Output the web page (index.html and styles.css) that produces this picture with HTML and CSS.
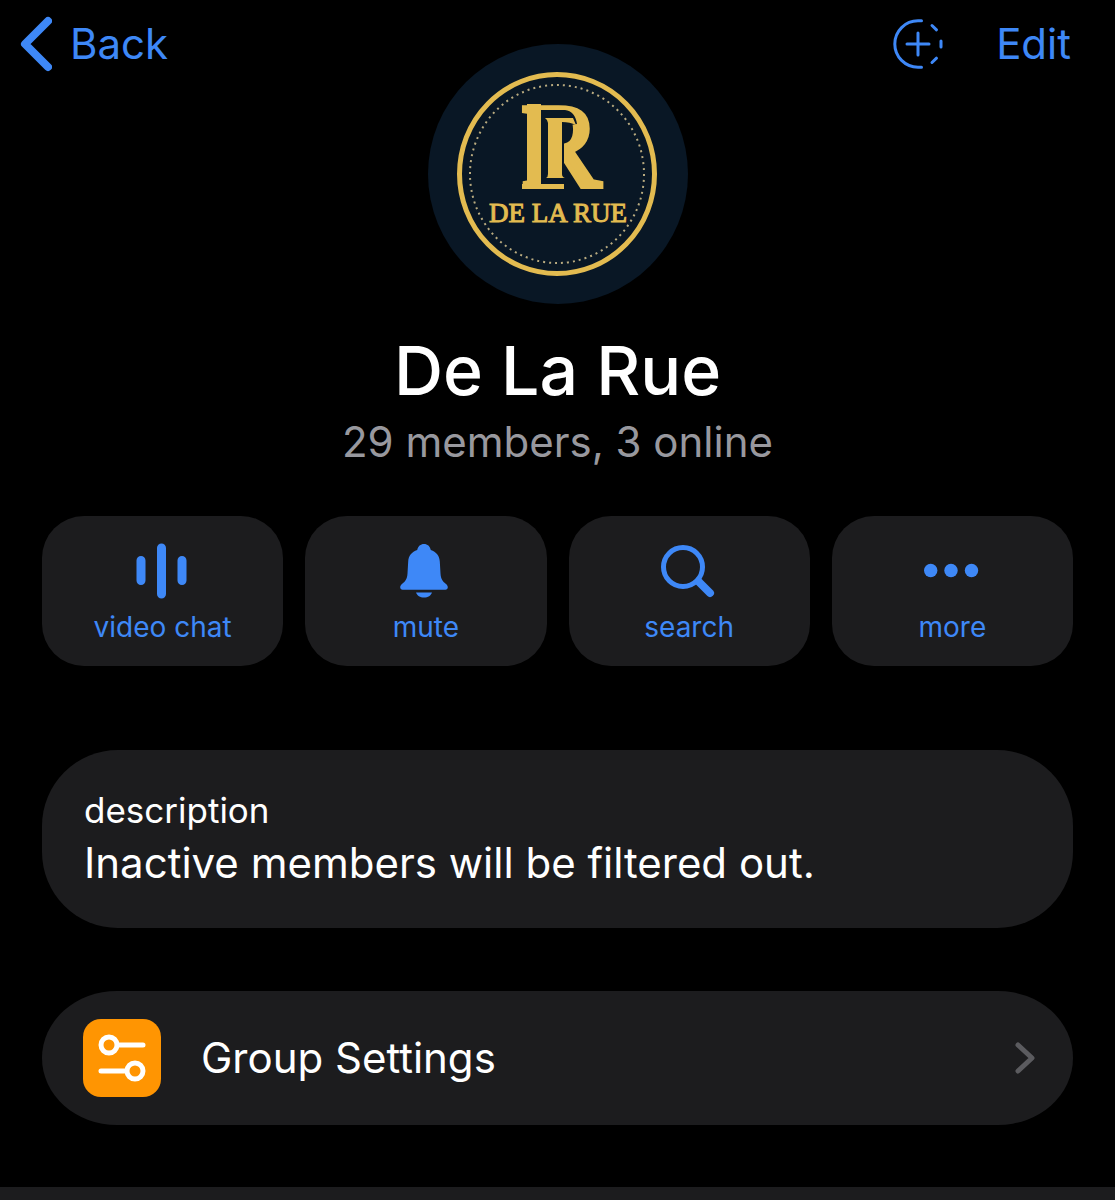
FILE: index.html
```
<!DOCTYPE html>
<html lang="en">
<head>
    <meta charset="UTF-8">
    <meta name="viewport" content="width=device-width, initial-scale=1">
    <title>De La Rue</title>
    <link rel="stylesheet" href="styles.css">
</head>
<body>
    <nav class="topbar">
        <button class="nav-button back">
            <svg width="32" height="56" viewBox="0 0 32 56" aria-hidden="true">
                <path d="M28 5 5 28l23 23" fill="none" stroke="currentColor" stroke-width="8" stroke-linecap="round" stroke-linejoin="round"/>
            </svg>
            Back
        </button>
        <div class="nav-actions">
            <button class="nav-button" aria-label="Add story">
                <svg width="52" height="52" viewBox="0 0 52 52" fill="none" stroke="currentColor" stroke-width="3" stroke-linecap="round" aria-hidden="true">
                    <path d="M29.5 2.8H26a23.2 23.2 0 0 0 0 46.4h3.5"/>
                    <path d="M40 7.5l4.5 4.3M49 23v6M44.5 40.2 40 44.5"/>
                    <path d="M26 15v22M15 26h22"/>
                </svg>
            </button>
            <button class="nav-button">Edit</button>
        </div>
    </nav>

    <header class="profile">
        <svg class="avatar" viewBox="0 0 260 260" role="img" aria-label="De La Rue logo">
            <circle class="logo-bg" cx="130" cy="130" r="130"/>
            <ellipse class="logo-ring" cx="129" cy="130" rx="97.500" ry="99.500"/>
            <ellipse class="logo-dots" cx="129" cy="130" rx="87" ry="89"/>
            <!-- monogram: big letter with a second stem set inside it -->
            <text class="logo-mark" x="93" y="143">R</text>
            <rect class="logo-gold" x="99" y="60" width="14" height="84"/>
            <path class="logo-bg" d="M113 66h24q10 1 12 14l-13 2v59h-23z"/>
            <path class="logo-gold" d="M117 74h28l3 7q-6-3-14-3v52q0 3 3 4h-19q2-1 2-4V79q0-3-3-5z"/>
            <rect class="logo-gold" x="94" y="140" width="42" height="5"/>
            <text class="logo-name" x="130" y="178">DE LA RUE</text>
        </svg>
        <h1>De La Rue</h1>
        <p class="members">29 members, 3 online</p>
    </header>

    <main>
        <div class="actions">
            <button class="action">
                <svg width="56" height="56" viewBox="0 0 56 56" fill="none" stroke="currentColor" stroke-width="9" stroke-linecap="round" aria-hidden="true">
                    <path d="M6 17.500v20M26.500 5v46M47 17.500v20"/>
                </svg>
                <span>video chat</span>
            </button>
            <button class="action">
                <svg width="56" height="56" viewBox="0 0 56 56" fill="currentColor" aria-hidden="true">
                    <path d="M26 1c3.500 0 6 2.300 6.800 6 5.400 2 8.700 5.700 9 11.500l.7 12c.3 6 2.500 8 5.500 10.500 1.300 1.200 1.800 2.100 1.800 3.300 0 1.400-1 2.400-2.400 2.400H4.600c-1.400 0-2.400-1-2.400-2.400 0-1.200.5-2.100 1.800-3.300 3-2.500 5.200-4.500 5.500-10.500l.7-12c.3-5.800 3.600-9.500 9-11.500C20 3.300 22.500 1 26 1z"/>
                    <path d="M18 49.500h16c-1 3-4 5-8 5s-7-2-8-5z"/>
                </svg>
                <span>mute</span>
            </button>
            <button class="action">
                <svg width="56" height="56" viewBox="0 0 56 56" fill="none" stroke="currentColor" stroke-linecap="round" aria-hidden="true">
                    <circle cx="22" cy="24" r="19.500" stroke-width="5"/>
                    <path d="M38 39l11 11" stroke-width="8"/>
                </svg>
                <span>search</span>
            </button>
            <button class="action">
                <svg width="56" height="56" viewBox="0 0 56 56" fill="currentColor" aria-hidden="true">
                    <circle cx="6.700" cy="27.500" r="6.700"/>
                    <circle cx="27" cy="27.500" r="6.700"/>
                    <circle cx="47.500" cy="27.500" r="6.700"/>
                </svg>
                <span>more</span>
            </button>
        </div>

        <section class="card description">
            <h2>description</h2>
            <p>Inactive members will be filtered out.</p>
        </section>

        <button class="card settings">
            <svg class="settings-icon" width="78" height="78" viewBox="0 0 78 78" fill="none" stroke="#fff" stroke-width="5" stroke-linecap="round" aria-hidden="true">
                <circle cx="26" cy="26" r="8"/>
                <path d="M36 26h24M18 52h24"/>
                <circle cx="52" cy="52" r="8"/>
            </svg>
            <span class="settings-label">Group Settings</span>
            <svg class="chevron" width="20" height="32" viewBox="0 0 20 32" fill="none" stroke="currentColor" stroke-width="5" stroke-linecap="round" stroke-linejoin="round" aria-hidden="true">
                <path d="M3 3l14 13L3 29"/>
            </svg>
        </button>
    </main>

    <footer class="tabs"></footer>
</body>
</html>
```
FILE: styles.css
```
* {
    box-sizing: border-box;
}
body {
    margin: 0;
    min-height: 100vh;
    display: flex;
    flex-direction: column;
    background-color: #000;
    color: #fff;
    font-family: Inter, "Liberation Sans", sans-serif;
}
button {
    border: none;
    padding: 0;
    background: none;
    font-family: inherit;
    cursor: pointer;
}
svg {
    display: block;
    flex: none;
}
h1, h2, p {
    margin: 0;
    font-weight: 400;
}

/* top bar */
.topbar {
    display: flex;
    justify-content: space-between;
    align-items: center;
    height: 88px;
    padding: 0 44px 0 20px;
}
.nav-button {
    display: flex;
    align-items: center;
    gap: 18px;
    color: #3e88f7;
    font-size: 42px;
    line-height: 52px;
}
.nav-actions {
    display: flex;
    align-items: center;
    gap: 52px;
}

/* profile */
.profile {
    display: flex;
    flex-direction: column;
    align-items: center;
    margin-top: -44px;
    text-align: center;
}
.avatar {
    width: 260px;
    height: 260px;
}
.logo-bg {
    fill: #091725;
}
.logo-gold {
    fill: #e3bb50;
}
.logo-ring {
    fill: none;
    stroke: #e3bb50;
    stroke-width: 5;
}
.logo-dots {
    fill: none;
    stroke: #b9ab80;
    stroke-width: 2;
    stroke-dasharray: 2 4;
}
.logo-mark, .logo-name {
    font-family: "Liberation Serif", serif;
    fill: #e3bb50;
    stroke: #e3bb50;
}
.logo-mark {
    font-size: 120px;
    stroke-width: 5;
}
.logo-name {
    font-size: 27px;
    text-anchor: middle;
    stroke-width: 1;
}
.profile h1 {
    margin-top: 24px;
    font-size: 68px;
    font-weight: 500;
    line-height: 84px;
}
.members {
    margin-top: 4px;
    color: #98989e;
    font-size: 42px;
    line-height: 52px;
}

/* cards and buttons */
main {
    padding: 0 42px;
}
.actions {
    display: grid;
    grid-template-columns: repeat(4, 1fr);
    gap: 22px;
    margin-top: 48px;
}
.action {
    display: flex;
    flex-direction: column;
    align-items: center;
    gap: 10px;
    height: 150px;
    padding-top: 27px;
    border-radius: 42px;
    background-color: #1c1c1e;
    color: #3e88f7;
    font-size: 28px;
    line-height: 36px;
}
.card {
    width: 100%;
    background-color: #1c1c1e;
    color: #fff;
    text-align: left;
}
.description {
    margin-top: 84px;
    padding: 36px 42px;
    border-radius: 76px;
}
.description h2 {
    font-size: 35px;
    line-height: 48px;
}
.description p {
    font-size: 42px;
    line-height: 58px;
}
.settings {
    display: flex;
    align-items: center;
    gap: 40px;
    margin-top: 63px;
    padding: 28px 38px 28px 41px;
    border-radius: 76px / 68px;
    font-size: 42px;
    line-height: 52px;
}
.settings-icon {
    border-radius: 18px;
    background-color: #ff9502;
}
.settings-label {
    flex: 1;
}
.chevron {
    color: #5b5b5f;
}
.tabs {
    flex: 1;
    margin-top: 62px;
    background-color: #1c1c1e;
}
```
